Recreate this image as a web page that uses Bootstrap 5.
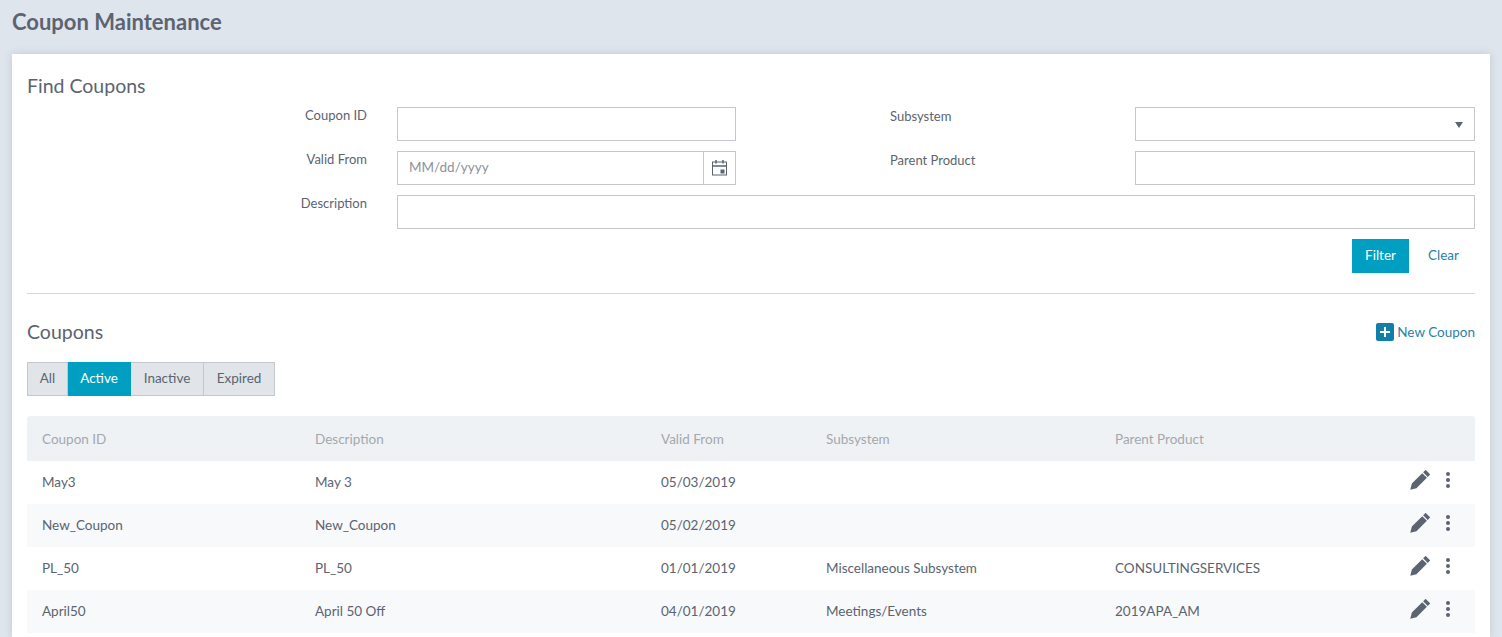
<!DOCTYPE html>
<html lang="en">
<head>
<meta charset="utf-8">
<title>Coupon Maintenance</title>
<link rel="stylesheet" href="https://cdn.jsdelivr.net/npm/bootstrap@5.3.0/dist/css/bootstrap.min.css">
<style>
html,body{height:100%;overflow:hidden}
body{background:#dfe5ed;color:#5b6470;font-family:"Lato","Open Sans",sans-serif;font-size:13.5px;display:flex;flex-direction:column}
.page-title{font-size:22px;font-weight:700;line-height:28px;margin:8px 0 18px 12px;color:#5b6470}
.sheet{flex:1;margin:0 12px;background:#fff;padding:20px 15px 0;box-shadow:0 0 8px rgba(60,70,90,.18)}
.sec-title{font-size:19.5px;font-weight:400;line-height:24px;margin:0;color:#5b6470}
.find-grid{display:grid;grid-template-columns:340px 30px 339px 154px 245px 340px;row-gap:10px;margin-top:9px}
.lbl{font-size:13px;line-height:18px;margin:-1px 0 0;color:#5b6470}
.lbl-r{text-align:right}
.lbl-sub{padding-top:1px}
.fld{height:34px;border:1px solid #c4c8cc;background:#fff;border-radius:0;box-shadow:none;padding:0 11px 2px;font-size:13.5px;color:#5b6470}
.fld::placeholder{color:#8b929a}
.span-desc{grid-column:3 / 7}
.date-wrap .fld{border-right:0;min-width:0}
.date-btn{flex:0 0 33px;width:33px;height:34px;border:1px solid #c4c8cc;background:#fff;display:flex;align-items:center;justify-content:center;padding:0;border-radius:0}
.sel-wrap{position:relative}
.caret-mark{position:absolute;right:12px;top:15px;width:0;height:0;border-left:4px solid transparent;border-right:4px solid transparent;border-top:6px solid #5b6470}
.btn-teal{background:#009fc1;color:#fff;border:0;border-radius:0;height:34px;width:57px;padding:0 0 2px;font-size:13.5px;font-weight:400}
.btn-teal:hover{background:#009fc1;color:#fff}
.btn-plain{color:#2b7fa8;border:0;background:none;padding:0 0 1px 3px;width:66px;height:34px;font-size:13.5px;border-radius:0}
.actions-row{margin-top:10px}
.rule{margin:20px 0 0;border:0;border-top:1px solid #d4d7da;opacity:1}
.head-row{margin-top:26px;height:24px}
.new-link{color:#2b7fa8;text-decoration:none;font-size:13.5px;line-height:18px}
.plus-box{width:18px;height:18px;background:#137fa8;border-radius:2px;display:inline-flex;align-items:center;justify-content:center;margin-right:3px}
.tabbar{margin-top:18px;height:34px}
.tabbar button{height:34px;background:#e1e4e8;border:1px solid #c4c8cc;border-left-width:0;color:#5b6470;padding:0 0 1px;font-size:13.5px;border-radius:0}
.tabbar button:first-child{border-left-width:1px}
.tabbar .on{background:#009fc1;color:#fff;border-color:#009fc1;font-weight:400}
.coupon-table{margin:20px 0 0;width:1448px;table-layout:fixed;border-collapse:collapse;color:#5b6470}
.coupon-table th{background:#eff2f5;color:#a4a8ad;font-weight:400;height:45px;padding:1px 0 0 15px;vertical-align:middle;border:0}
.coupon-table td{height:43px;padding:0 0 0 15px;vertical-align:middle;border:0;background:transparent;color:#5b6470}
.coupon-table tbody tr:nth-child(even) td{background:#f7f9fb}
.coupon-table th:first-child{border-top-left-radius:3px}
.coupon-table th:last-child{border-top-right-radius:3px}
.act-cell{display:flex;align-items:center;justify-content:flex-end;gap:15px;padding-right:24px;margin-top:-6px}
</style>
</head>
<body>
<h1 class="page-title">Coupon Maintenance</h1>
<main class="sheet">
  <h2 class="sec-title">Find Coupons</h2>
  <form class="find-grid">
    <label class="lbl lbl-r">Coupon ID</label><span></span>
    <input class="form-control fld" type="text">
    <span></span>
    <label class="lbl lbl-sub">Subsystem</label>
    <div class="sel-wrap"><input class="form-control fld" type="text"><span class="caret-mark"></span></div>

    <label class="lbl lbl-r">Valid From</label><span></span>
    <div class="d-flex date-wrap">
      <input class="form-control fld" type="text" placeholder="MM/dd/yyyy">
      <button type="button" class="date-btn" aria-label="Open calendar">
        <svg width="15" height="16" viewBox="0 0 15 16" fill="none" stroke="#5b6470" stroke-width="1"><rect x=".5" y="2" width="14" height="13"/><path d="M.5 6h14M4 0v3.500M11 0v3.500" stroke-width="1.500"/><rect x="8.500" y="9.500" width="4" height="4" fill="#5b6470" stroke="none"/></svg>
      </button>
    </div>
    <span></span>
    <label class="lbl lbl-sub">Parent Product</label>
    <input class="form-control fld" type="text">

    <label class="lbl lbl-r">Description</label><span></span>
    <input class="form-control fld span-desc" type="text">
  </form>
  <div class="d-flex justify-content-end actions-row">
    <button type="button" class="btn btn-teal">Filter</button>
    <button type="button" class="btn btn-plain">Clear</button>
  </div>
  <hr class="rule">
  <div class="d-flex justify-content-between align-items-center head-row">
    <h2 class="sec-title">Coupons</h2>
    <a href="#" class="new-link d-inline-flex align-items-center">
      <span class="plus-box"><svg width="12" height="12" viewBox="0 0 12 12"><path d="M6 1v10M1 6h10" stroke="#fff" stroke-width="2"/></svg></span>New Coupon
    </a>
  </div>
  <div class="d-flex tabbar">
    <button type="button" style="width:41px">All</button>
    <button type="button" class="on" style="width:63px">Active</button>
    <button type="button" style="width:73px">Inactive</button>
    <button type="button" style="width:71px">Expired</button>
  </div>
  <table class="table coupon-table">
    <colgroup><col style="width:273px"><col style="width:346px"><col style="width:165px"><col style="width:289px"><col style="width:265px"><col></colgroup>
    <thead><tr><th>Coupon ID</th><th>Description</th><th>Valid From</th><th>Subsystem</th><th>Parent Product</th><th></th></tr></thead>
    <tbody>
      <tr><td>May3</td><td>May 3</td><td>05/03/2019</td><td></td><td></td><td><div class="act-cell"><svg width="20" height="20" viewBox="0 0 16 16" fill="#5b6470"><path d="M12.850.150a.500.500 0 0 0-.700 0L10.500 1.790l3.710 3.710 1.650-1.650a.500.500 0 0 0 0-.700zM13.500 6.200 9.800 2.500 1.650 10.650l-.150.150L.200 15.800 5.200 14.500l.150-.150z"/></svg><svg width="6" height="18" viewBox="0 0 6 18" fill="#5b6470"><circle cx="3" cy="3" r="2"/><circle cx="3" cy="9" r="2"/><circle cx="3" cy="15" r="2"/></svg></div></td></tr>
      <tr><td>New_Coupon</td><td>New_Coupon</td><td>05/02/2019</td><td></td><td></td><td><div class="act-cell"><svg width="20" height="20" viewBox="0 0 16 16" fill="#5b6470"><path d="M12.850.150a.500.500 0 0 0-.700 0L10.500 1.790l3.710 3.710 1.650-1.650a.500.500 0 0 0 0-.700zM13.500 6.200 9.800 2.500 1.650 10.650l-.150.150L.200 15.800 5.200 14.500l.150-.150z"/></svg><svg width="6" height="18" viewBox="0 0 6 18" fill="#5b6470"><circle cx="3" cy="3" r="2"/><circle cx="3" cy="9" r="2"/><circle cx="3" cy="15" r="2"/></svg></div></td></tr>
      <tr><td>PL_50</td><td>PL_50</td><td>01/01/2019</td><td>Miscellaneous Subsystem</td><td>CONSULTINGSERVICES</td><td><div class="act-cell"><svg width="20" height="20" viewBox="0 0 16 16" fill="#5b6470"><path d="M12.850.150a.500.500 0 0 0-.700 0L10.500 1.790l3.710 3.710 1.650-1.650a.500.500 0 0 0 0-.700zM13.500 6.200 9.800 2.500 1.650 10.650l-.150.150L.200 15.800 5.200 14.500l.150-.150z"/></svg><svg width="6" height="18" viewBox="0 0 6 18" fill="#5b6470"><circle cx="3" cy="3" r="2"/><circle cx="3" cy="9" r="2"/><circle cx="3" cy="15" r="2"/></svg></div></td></tr>
      <tr><td>April50</td><td>April 50 Off</td><td>04/01/2019</td><td>Meetings/Events</td><td>2019APA_AM</td><td><div class="act-cell"><svg width="20" height="20" viewBox="0 0 16 16" fill="#5b6470"><path d="M12.850.150a.500.500 0 0 0-.700 0L10.500 1.790l3.710 3.710 1.650-1.650a.500.500 0 0 0 0-.700zM13.500 6.200 9.800 2.500 1.650 10.650l-.150.150L.200 15.800 5.200 14.500l.150-.150z"/></svg><svg width="6" height="18" viewBox="0 0 6 18" fill="#5b6470"><circle cx="3" cy="3" r="2"/><circle cx="3" cy="9" r="2"/><circle cx="3" cy="15" r="2"/></svg></div></td></tr>
    </tbody>
  </table>
</main>
<script src="https://cdn.jsdelivr.net/npm/bootstrap@5.3.0/dist/js/bootstrap.bundle.min.js"></script>
</body>
</html>
